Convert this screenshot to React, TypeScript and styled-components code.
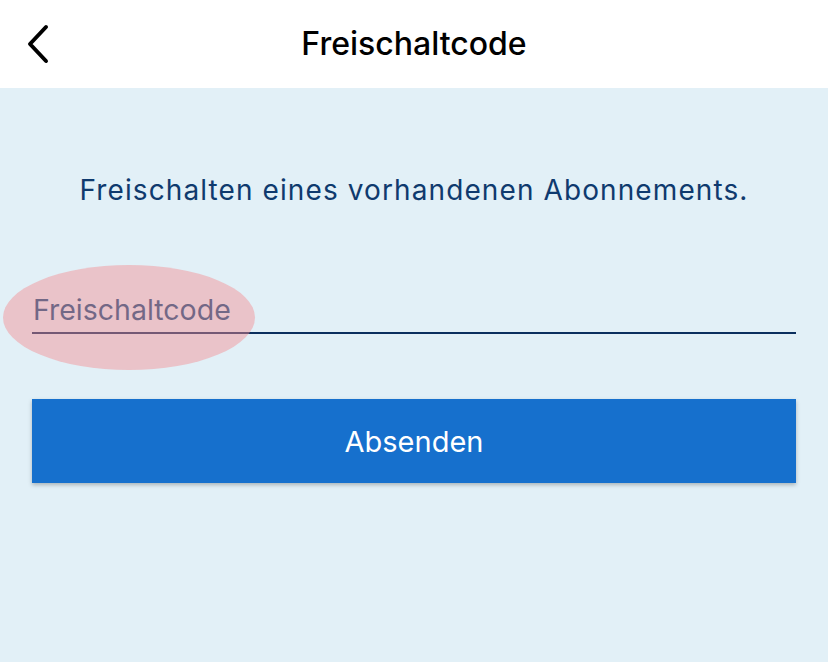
import React from "react";
import styled, { createGlobalStyle } from "styled-components";

const Global = createGlobalStyle`
  html, body { margin: 0; padding: 0; }
  body { font-family: Inter, "Noto Sans", sans-serif; background: #e2f0f7; }
  #root { min-height: 662px; }
`;

const Screen = styled.div`
  width: 828px;
  height: 662px;
  display: flex;
  flex-direction: column;
  background: #e2f0f7;
  overflow: hidden;
`;

const Header = styled.header`
  height: 88px;
  flex: none;
  background: #ffffff;
  display: grid;
  grid-template-columns: 88px 1fr 88px;
  align-items: center;
`;

const BackButton = styled.button`
  border: 0;
  background: transparent;
  padding: 0 0 0 24px;
  height: 88px;
  display: flex;
  align-items: center;
  cursor: pointer;
`;

const Title = styled.h1`
  margin: 0;
  text-align: center;
  font-family: Inter, sans-serif;
  font-weight: 500;
  font-size: 32px;
  line-height: 40px;
  color: #000;
  letter-spacing: 0;
`;

const Content = styled.main`
  flex: 1;
  display: flex;
  flex-direction: column;
  padding: 0 32px;
`;

const Lead = styled.p`
  margin: 86px 0 0;
  text-align: center;
  font-size: 28px;
  font-weight: 400;
  letter-spacing: 1.1px;
  color: #0f3a6e;
  line-height: 32px;
`;

const Field = styled.div`
  position: relative;
  margin-top: 86px;
`;

const Highlight = styled.div`
  position: absolute;
  left: -29px;
  top: -27px;
  width: 252px;
  height: 105px;
  border-radius: 50%;
  background: rgba(245, 140, 145, 0.45);
  pointer-events: none;
`;

const Input = styled.input`
  display: block;
  width: 100%;
  box-sizing: border-box;
  border: 0;
  border-bottom: 2px solid #0b2f5e;
  background: transparent;
  font-family: Inter, sans-serif;
  font-size: 28.5px;
  padding: 0 0 5px 1px;
  height: 42px;
  color: #0f3a6e;
  outline: none;
  &::placeholder { color: #084c7f; opacity: 1; }
`;

const Submit = styled.button`
  margin-top: 65px;
  height: 84px;
  border: 0;
  background: #1670cd;
  color: #ffffff;
  font-family: Inter, sans-serif;
  font-size: 29px;
  font-weight: 400;
  box-shadow: 0 2px 4px rgba(0, 0, 0, 0.25);
  cursor: pointer;
`;

export default function App() {
  return (
    <>
      <Global />
      <Screen>
        <Header>
          <BackButton aria-label="Zurück">
            <svg width="28" height="40" viewBox="0 0 28 40" fill="none">
              <path d="M22 3 L6 20 L22 37" stroke="#000" strokeWidth="4" strokeLinecap="round" strokeLinejoin="round" />
            </svg>
          </BackButton>
          <Title>Freischaltcode</Title>
          <span />
        </Header>
        <Content>
          <Lead>Freischalten eines vorhandenen Abonnements.</Lead>
          <Field>
            <Input placeholder="Freischaltcode" />
            <Highlight />
          </Field>
          <Submit>Absenden</Submit>
        </Content>
      </Screen>
    </>
  );
}
